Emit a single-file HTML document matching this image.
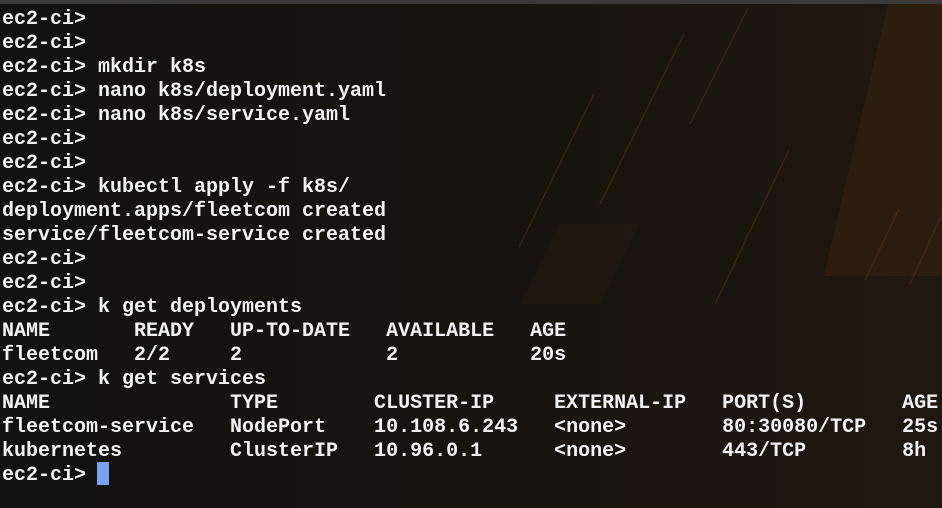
<!DOCTYPE html>
<html><head><meta charset="utf-8"><style>
html,body{margin:0;padding:0;}
body{width:942px;height:508px;overflow:hidden;background:#121212;position:relative;}
.top{position:absolute;left:0;top:0;width:942px;height:4px;background:#3a3a3a;}
svg{position:absolute;left:0;top:4px;}
pre{position:absolute;left:2px;top:8px;margin:0;font-family:"Liberation Mono",monospace;font-weight:bold;font-size:20px;line-height:24px;color:#f2f2f2;letter-spacing:0;}
.cur{position:absolute;left:97px;top:462px;width:12px;height:23px;background:#7aa0f0;}
</style></head><body>
<div class="top"></div>
<svg width="942" height="504" viewBox="0 0 942 504">
<defs>
<linearGradient id="g" x1="0" x2="1" y1="0" y2="0"><stop offset="0" stop-color="#121212"/><stop offset="0.5" stop-color="#16140f"/><stop offset="1" stop-color="#201810"/></linearGradient>
</defs>
<rect width="942" height="504" fill="url(#g)"/>
<polygon points="888,0 942,0 942,272 824,272" fill="#3a2612" opacity="0.45"/>
<polygon points="560,220 640,220 600,300 520,300" fill="#2a1d10" opacity="0.35"/>
<g stroke="#5a3612" stroke-width="1.2" opacity="0.5">
<line x1="594" y1="90" x2="519" y2="243"/>
<line x1="684" y1="30" x2="600" y2="200"/>
<line x1="789" y1="146" x2="715" y2="300"/>
<line x1="899" y1="205" x2="865" y2="276"/>
<line x1="748" y1="4" x2="690" y2="120"/>
<line x1="942" y1="210" x2="910" y2="280"/>
</g>
</svg>
<pre>ec2-ci>
ec2-ci>
ec2-ci> mkdir k8s
ec2-ci> nano k8s/deployment.yaml
ec2-ci> nano k8s/service.yaml
ec2-ci>
ec2-ci>
ec2-ci> kubectl apply -f k8s/
deployment.apps/fleetcom created
service/fleetcom-service created
ec2-ci>
ec2-ci>
ec2-ci> k get deployments
NAME       READY   UP-TO-DATE   AVAILABLE   AGE
fleetcom   2/2     2            2           20s
ec2-ci> k get services
NAME               TYPE        CLUSTER-IP     EXTERNAL-IP   PORT(S)        AGE
fleetcom-service   NodePort    10.108.6.243   &lt;none&gt;        80:30080/TCP   25s
kubernetes         ClusterIP   10.96.0.1      &lt;none&gt;        443/TCP        8h
ec2-ci> </pre>
<div class="cur"></div>
</body></html>
